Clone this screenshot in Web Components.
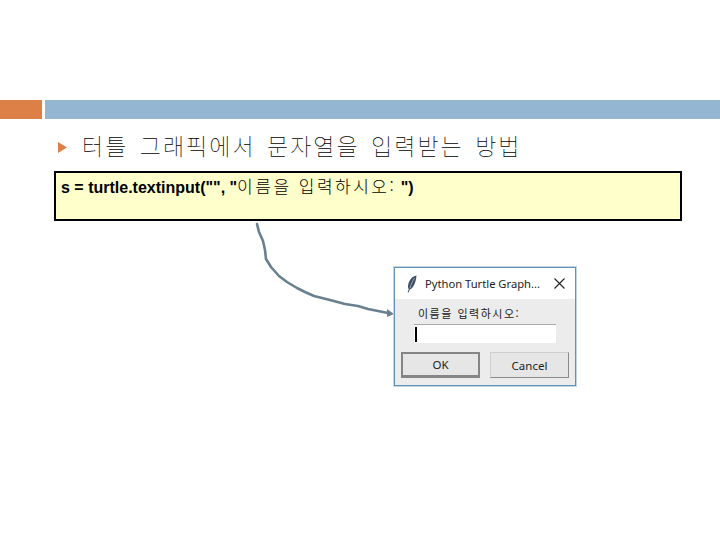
<!DOCTYPE html>
<html lang="ko">
<head>
<meta charset="utf-8">
<title>turtle.textinput</title>
<style>
  html, body { margin: 0; padding: 0; background: #fff; }
  body { width: 720px; height: 540px; overflow: hidden; position: relative; }
</style>
</head>
<body>
<slide-header></slide-header>
<slide-bullet>터틀 그래픽에서 문자열을 입력받는 방법</slide-bullet>
<code-box><b>s = turtle.textinput("", "</b><span>이름을 입력하시오:</span><b> ")</b></code-box>
<curve-arrow></curve-arrow>
<input-dialog title-text="Python Turtle Graph..." prompt="이름을 입력하시오:"></input-dialog>

<script>
class SlideHeader extends HTMLElement {
  constructor() {
    super();
    this.attachShadow({ mode: 'open' });
    this.shadowRoot.innerHTML = `
      <style>
        :host { display: flex; gap: 3px; height: 19px; padding-top: 100px; }
        .accent { width: 42px; background: #dd8047; }
        .band { flex: 1; background: #94b6d2; }
      </style>
      <div class="accent"></div>
      <div class="band"></div>
    `;
  }
}

class SlideBullet extends HTMLElement {
  constructor() {
    super();
    this.attachShadow({ mode: 'open' });
    this.shadowRoot.innerHTML = `
      <style>
        :host {
          display: flex;
          align-items: center;
          height: 52px;
          padding-left: 58px;
          font-family: "Noto Sans CJK KR", sans-serif;
          font-weight: 100;
          font-size: 23px;
          letter-spacing: 2px;
          word-spacing: 3px;
          color: #000;
        }
        svg { width: 9px; height: 11px; margin: 4px 15px 0 0; flex: none; }
      </style>
      <svg viewBox="0 0 9 11"><path d="M0 0 L9 5.5 L0 11 Z" fill="#dd8047"/></svg>
      <slot></slot>
    `;
  }
}

class CodeBox extends HTMLElement {
  constructor() {
    super();
    this.attachShadow({ mode: 'open' });
    this.shadowRoot.innerHTML = `
      <style>
        :host {
          display: block;
          box-sizing: border-box;
          width: 628px;
          height: 50px;
          margin-left: 54px;
          padding: 3px 0 0 5px;
          background: #ffffcc;
          border: 2px solid #000;
          font-family: "Liberation Sans", "Noto Sans CJK KR", sans-serif;
          font-size: 16px;
          line-height: 20px;
          color: #000;
        }
        ::slotted(span) {
          font-family: "Noto Sans CJK KR", sans-serif;
          font-weight: 300;
          font-size: 17px;
          letter-spacing: 2.5px;
          color: #000;
        }
      </style>
      <slot></slot>
    `;
  }
}

// hand drawn connector from the code box down to the dialog
class CurveArrow extends HTMLElement {
  constructor() {
    super();
    this.attachShadow({ mode: 'open' });
    this.shadowRoot.innerHTML = `
      <style>
        :host { position: absolute; left: 250px; top: 220px; width: 150px; height: 100px; display: block; }
        svg { display: block; }
      </style>
      <svg width="150" height="100" viewBox="250 220 150 100">
        <path d="M257 224 L259 232 L263 241 L265 250 L266 259 L271 267 L279 276 L287 282 L297 288 L305 292 L314 296 L322 298 L330 300 L345 304 L358 306 L368 309 L388 313"
          fill="none" stroke="#69808f" stroke-width="2.6" stroke-linecap="round" stroke-linejoin="round"/>
        <path d="M387 309 L394 314 L387 317 Z" fill="#69808f"/>
      </svg>
    `;
  }
}

class InputDialog extends HTMLElement {
  constructor() {
    super();
    this.attachShadow({ mode: 'open' });
    this.shadowRoot.innerHTML = `
      <style>
        :host {
          position: absolute;
          left: 394px;
          top: 267px;
          box-sizing: border-box;
          width: 182px;
          height: 119px;
          display: flex;
          flex-direction: column;
          background: #ececec;
          border: 1px solid #5f93bb;
          box-shadow: 0 0 0 1px #c3d6e4;
          font-family: "Noto Sans", sans-serif;
          color: #222;
        }
        .title {
          display: flex;
          align-items: center;
          height: 31px;
          background: #fff;
          padding: 0 10px 0 12px;
          font-size: 11.2px;
        }
        .title svg.feather { width: 10px; height: 18px; margin-right: 8px; flex: none; }
        .title span { flex: 1; white-space: nowrap; }
        .title svg.close { width: 11px; height: 11px; flex: none; }
        .body { flex: 1; display: flex; flex-direction: column; padding: 7px 6px 6px; }
        .prompt {
          font-family: "Noto Sans CJK KR", sans-serif;
          font-size: 11px;
          line-height: 14px;
          padding-left: 17px;
          letter-spacing: 1.5px;
        }
        .field {
          height: 19px;
          margin: 4px 13px 0 13px;
          background: #fff;
          border-top: 1px solid #a8a8a8;
          box-sizing: border-box;
          padding: 2px 0 0 1px;
        }
        .caret { width: 2px; height: 15px; background: #000; }
        .buttons { display: flex; gap: 10px; margin-top: 9px; }
        button {
          flex: none;
          width: 79px;
          height: 26px;
          padding: 0;
          background: #e6e6e6;
          border: 1px solid;
          border-color: #d0d0d0 #8a8a8a #8a8a8a #d0d0d0;
          font: 11.5px "Noto Sans", sans-serif;
          color: #222;
        }
        button.ok { border-color: #858585; border-width: 2px 2px 3px 2px; }
      </style>
      <div class="title">
        <svg class="feather" viewBox="0 0 10 18">
          <path d="M9.5 0.5 C5 1 1.2 6 1 11.5 C1 12.5 1.3 13.5 1.8 14 L0.6 17.4 L1.5 17.6 L2.8 14.4 C6.5 13.5 9 7 9.5 0.5 Z" fill="#3f5068"/>
          <path d="M7.5 3 C5.5 6 4 9.5 3 13" stroke="#a9b6c4" stroke-width="0.8" fill="none"/>
        </svg>
        <span id="title"></span>
        <svg class="close" viewBox="0 0 11 11">
          <path d="M0.5 0.5 L10.5 10.5 M10.5 0.5 L0.5 10.5" stroke="#222" stroke-width="1.1" fill="none"/>
        </svg>
      </div>
      <div class="body">
        <div class="prompt" id="prompt"></div>
        <div class="field"><div class="caret"></div></div>
        <div class="buttons">
          <button class="ok">OK</button>
          <button>Cancel</button>
        </div>
      </div>
    `;
  }

  connectedCallback() {
    this.shadowRoot.getElementById('title').textContent = this.getAttribute('title-text');
    this.shadowRoot.getElementById('prompt').textContent = this.getAttribute('prompt');
  }
}

customElements.define('slide-header', SlideHeader);
customElements.define('slide-bullet', SlideBullet);
customElements.define('code-box', CodeBox);
customElements.define('curve-arrow', CurveArrow);
customElements.define('input-dialog', InputDialog);
</script>
</body>
</html>
